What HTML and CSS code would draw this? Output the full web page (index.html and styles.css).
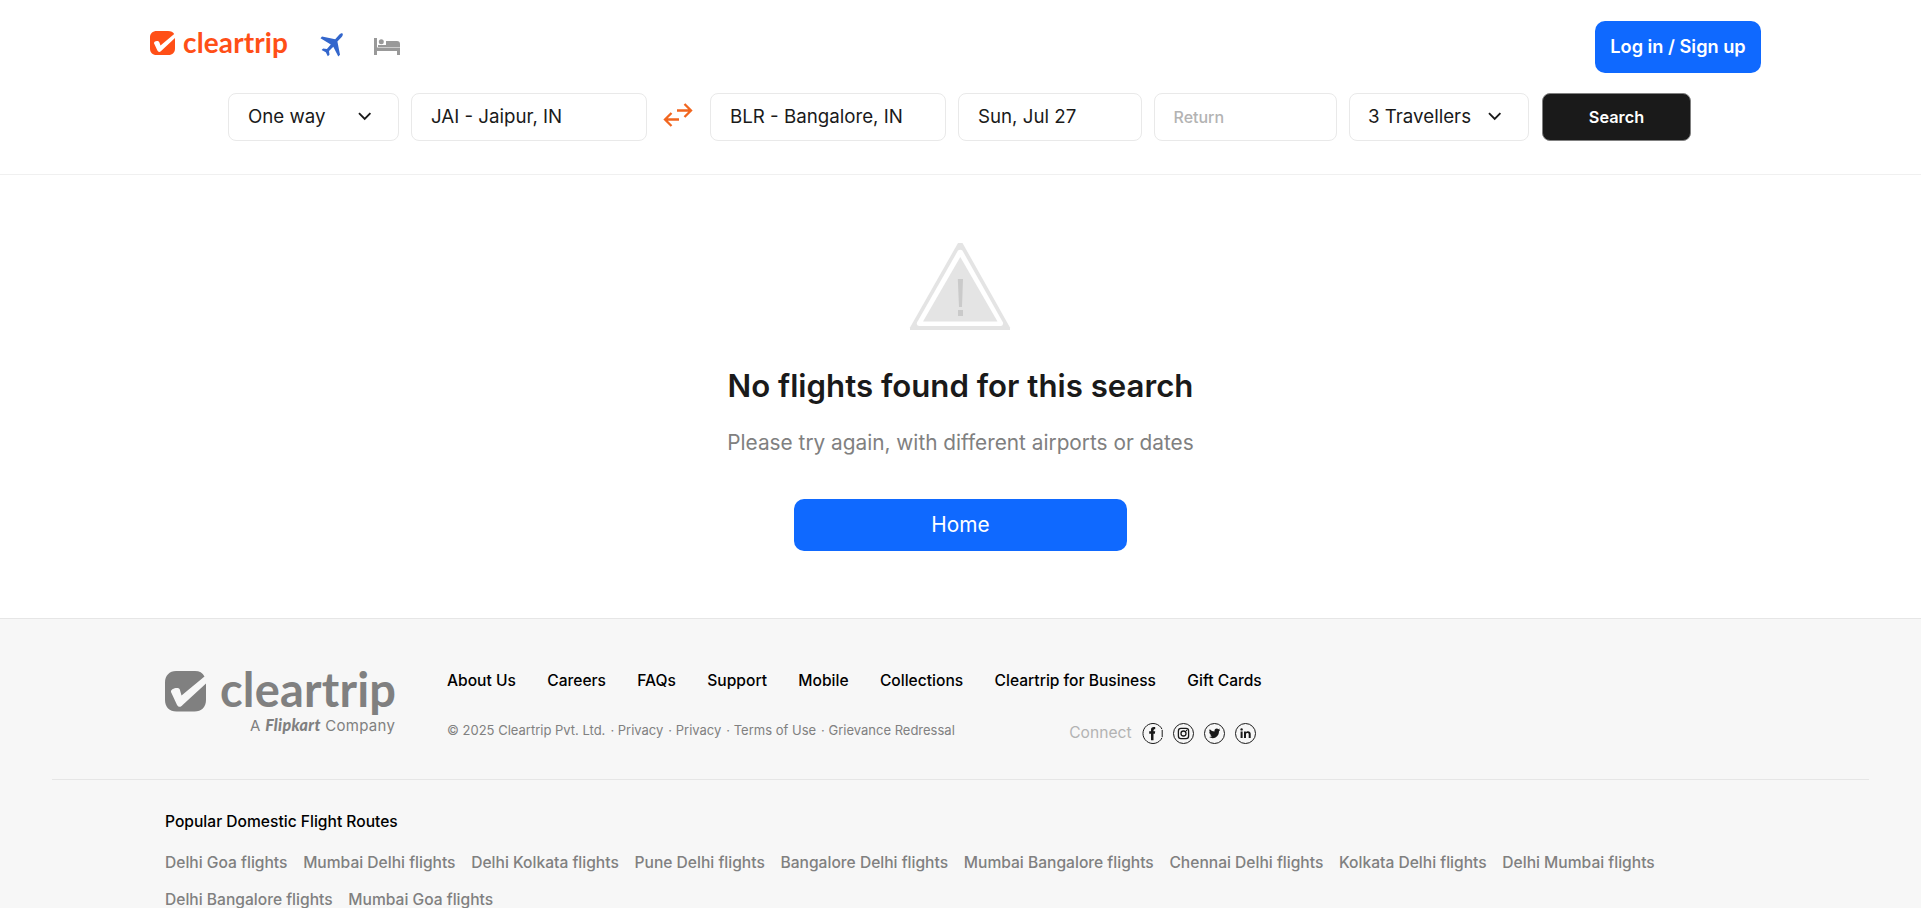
FILE: index.html
```html
<!DOCTYPE html>
<html lang="en">
<head>
<meta charset="utf-8">
<title>Cleartrip</title>
<link rel="stylesheet" href="styles.css">
</head>
<body>
<header class="header">
  <div class="topbar">
    <svg class="logo" width="140" height="40" viewBox="0 -4 140 40">
      <path fill="#ff4f17" d="M7 1h11c3 0 5.200 1.200 6.200 3L10.500 15.500 9.300 12.200C8.600 10.500 4 10.600 4 13.300L7.400 20.600c.9 1.800 2.400 1.700 3.700.3L25 8v10.500c0 4-2.500 6.500-6.500 6.500h-12C2.500 25 0 22.500 0 18.500v-11C0 3.500 2.500 1 7 1z"/>
      <text class="wordmark" x="33" y="23" font-size="28" textLength="105" fill="#ff4f17">cleartrip</text>
    </svg>
    <svg class="plane" width="23" height="24" viewBox="0 0 23 24">
      <path fill="#3366cc" d="M22.500.4c.7.800.3 2.300-.8 3.500l-4.300 4.500 2.600 13.300-1.700 1.900-5-9.800-4.300 4.200.5 3.700-1.700 1.500-2-4-4.200-2.200 1.500-1.600 3.800.5 3.900-4.500L.5 5.300 2 3.400l13.200 2.800L19.400 1.600C20.700.3 22-.1 22.500.4z"/>
    </svg>
    <svg class="bed" width="26" height="17" viewBox="0 0 26 17">
      <path fill="#999" d="M0 0h3v9.500h23V17h-3v-4H3v4H0zM12 3h11q3 0 3 3v3H4V7h8z"/>
      <circle cx="7.300" cy="3.800" r="2.500" fill="#999"/>
    </svg>
    <button class="login">Log in / Sign up</button>
  </div>
  <div class="search">
    <div class="field trip"><span>One way</span><svg width="14" height="9" viewBox="0 0 14 9"><path class="chev" d="M1 1.200l5.700 5.700L12.400 1.200"/></svg></div>
    <div class="field city">JAI - Jaipur, IN</div>
    <svg class="swap" width="30" height="24" viewBox="0 0 30 24"><path d="M14 7.500h14M21.500 1l6.500 6.500-6.500 6.500M16 16.500H2M8.500 10L2 16.500 8.500 23"/></svg>
    <div class="field city">BLR - Bangalore, IN</div>
    <div class="field date">Sun, Jul 27</div>
    <div class="field date empty">Return</div>
    <div class="field pax"><span>3 Travellers</span><svg width="14" height="9" viewBox="0 0 14 9"><path class="chev" d="M1 1.200l5.700 5.700L12.400 1.200"/></svg></div>
    <button class="go">Search</button>
  </div>
</header>
<main class="empty-state">
  <svg class="warn" width="100" height="88" viewBox="0 0 100 88">
    <path fill="#e4e4e4" d="M48 0h4.500L100 84.500V87H0v-2.500z"/>
    <path fill="#fff" d="M48 7.500q2.200-1.500 4.400 0L93 79.500q.5 3-2 3.500H9q-3-.5-2-3.500z"/>
    <path fill="#e4e4e4" d="M50.300 14L87.500 78.500H13z"/>
    <path fill="#cacaca" d="M47.800 36h5.200l-1 28h-3zM48 67h5v6h-5z"/>
  </svg>
  <h1 class="title">No flights found for this search</h1>
  <p class="subtitle">Please try again, with different airports or dates</p>
  <button class="home">Home</button>
</main>
<footer class="footer">
  <div class="about">
    <svg class="brand" width="232" height="84" viewBox="0 -12 232 84">
      <path fill="#808080" d="M11 0h19c4.500 0 7.500 1.800 9.500 5.500L16.500 24.500 14.800 18.600C13.500 15.500 5.500 17.500 6 21L11.800 33.500c1.400 3 4 3 5.800.5L41 12.500V29c0 7-4.500 11.500-11.500 11.500h-18C4.500 40.500 0 36 0 29V11.500C0 4.500 4.500 0 11 0z"/>
      <text class="wordmark" x="55" y="35.500" font-size="47" textLength="176" fill="#808080">cleartrip</text>
      <text class="tagline" x="85" y="59.500" textLength="145" fill="#808080">A <tspan class="flipkart">Flipkart</tspan> Company</text>
    </svg>
    <div class="info">
      <nav class="links"><a>About Us</a><a>Careers</a><a>FAQs</a><a>Support</a><a>Mobile</a><a>Collections</a><a>Cleartrip for Business</a><a>Gift Cards</a></nav>
      <div class="legal">
        <div class="copy"><span>© 2025 Cleartrip Pvt. Ltd.</span><span>· Privacy</span><span>· Privacy</span><span>· Terms of Use</span><span>· Grievance Redressal</span></div>
        <div class="connect">
          <span>Connect</span>
          <svg width="21" height="21" viewBox="0 0 21 21"><path class="ring" d="M20 6.200A10 10 0 1 0 20 14.800"/><path class="ring" d="M20.200 7v7"/><path d="M9 17.200v-6.400H7.200V8.200H9V6.700c0-2 1.200-3 4.200-2.600v2.200c-1.500-.1-1.700.2-1.700 1.900h1.700l-.3 2.600h-1.400v6.400z"/></svg>
          <svg width="21" height="21" viewBox="0 0 21 21"><circle class="ring" cx="10.500" cy="10.500" r="10"/><rect class="line" x="5.400" y="5.400" width="10.200" height="10.200" rx="2.600"/><circle class="line" cx="10.500" cy="10.500" r="2.500"/><circle cx="13.500" cy="7.500" r=".7"/></svg>
          <svg width="21" height="21" viewBox="0 0 21 21"><circle class="ring" cx="10.500" cy="10.500" r="10"/><path d="M5.800 6.200q2 2.300 4.700 2.400c-.5-3 2.500-4 4-2.400l1.600-.6-.9 1.500 1-.2-1.200 1.400c0 6-5.500 8.500-9.900 5.800q2 0 3-1c-1.100-.1-1.800-.7-2-1.600h1c-1.200-.4-1.900-1.200-1.800-2.500l1 .3c-1.100-.8-1.300-2-.5-3.100z"/></svg>
          <svg width="21" height="21" viewBox="0 0 21 21"><circle class="ring" cx="10.500" cy="10.500" r="10"/><path d="M5.600 8.400h2V15h-2zM9 8.400h1.900v.9c1.100-1.700 4.800-1.600 4.800 1.800V15h-2v-3.500c0-2-2.700-1.900-2.700 0V15H9z"/><circle cx="6.600" cy="6.400" r="1.200"/></svg>
        </div>
      </div>
    </div>
  </div>
  <div class="popular">
    <h2 class="routes-title">Popular Domestic Flight Routes</h2>
    <div class="routes"><a>Delhi Goa flights</a><a>Mumbai Delhi flights</a><a>Delhi Kolkata flights</a><a>Pune Delhi flights</a><a>Bangalore Delhi flights</a><a>Mumbai Bangalore flights</a><a>Chennai Delhi flights</a><a>Kolkata Delhi flights</a><a>Delhi Mumbai flights</a><a>Delhi Bangalore flights</a><a>Mumbai Goa flights</a></div>
  </div>
</footer>
</body>
</html>
```

FILE: styles.css
```css
* { box-sizing: border-box; }
body { margin: 0; height: 908px; overflow: hidden; background: #fff; color: #1a1a1a; font-family: Inter, sans-serif; }
button { border: 0; padding: 0; font-family: inherit; color: #fff; }
svg { display: block; flex: none; overflow: visible; }
.header { height: 175px; border-bottom: 1px solid #f0f0f0; }
.topbar { display: flex; align-items: flex-start; height: 93px; padding: 0 160px 0 150px; }
.wordmark { font-family: Lato, sans-serif; font-weight: 700; }
.logo { margin-top: 26px; }
.plane { margin: 33px 0 0 30px; }
.bed { margin: 38px 0 0 31px; }
.login { margin: 21px 0 0 auto; width: 166px; height: 52px; padding-bottom: 2px; border-radius: 10px; background: #0f69ff; font-size: 18.200px; font-weight: 600; white-space: nowrap; }
.search { display: flex; padding-left: 228px; }
.field { display: flex; align-items: center; height: 48px; margin-right: 12px; padding: 0 19px 1px; border: 1px solid #e9e9e9; border-radius: 8px; font-size: 18.720px; white-space: nowrap; }
.chev { fill: none; stroke: #1a1a1a; stroke-width: 1.9; }
.trip { width: 171px; justify-content: space-between; padding-right: 26px; }
.city { width: 236px; }
.swap { margin: 10px 17px 0 4px; fill: none; stroke: #f1661f; stroke-width: 2.3; }
.date { width: 183.500px; }
.empty { font-size: 16px; font-weight: 500; color: #b3b3b3; padding-top: 1px; }
.pax { width: 180px; margin-right: 13px; padding-left: 18px; justify-content: space-between; padding-right: 26px; }
.go { width: 149px; height: 48px; border: 1px solid #808080; border-radius: 8px; background: #1a1a1a; font-size: 16.300px; font-weight: 600; }
.empty-state { display: flex; flex-direction: column; align-items: center; height: 443px; padding-top: 68px; }
.warn { margin-right: 2px; }
.title { margin: 35px 0 0; font-size: 31.200px; line-height: 40px; font-weight: 600; white-space: nowrap; }
.subtitle { margin: 24px 0 0; font-size: 20.800px; line-height: 26px; color: #808080; white-space: nowrap; }
.home { width: 333px; height: 52px; margin-top: 43px; padding-bottom: 2px; border-radius: 10px; background: #0f69ff; font-size: 20.800px; }
.footer { height: 290px; border-top: 1px solid #e6e6e6; background: #f7f7f7; }
.about { display: flex; height: 161px; margin: 0 52px; padding: 40px 0 0 113px; border-bottom: 1px solid #e6e6e6; }
.tagline { font-size: 15px; }
.flipkart { font-family: Lato, sans-serif; font-size: 16px; font-weight: 900; font-style: italic; }
.info { margin: 12px 0 0 50px; }
.links { display: flex; gap: 31.300px; font-size: 15.600px; line-height: 20px; font-weight: 500; white-space: nowrap; color: #000; }
.legal { display: flex; justify-content: space-between; align-items: flex-start; width: 808.500px; margin-top: 31px; }
.copy { display: flex; gap: 5px; font-size: 13px; line-height: 16px; color: #808080; white-space: nowrap; }
.connect { display: flex; gap: 10px; align-items: center; padding-top: 1px; font-size: 15.600px; line-height: 20px; color: #b3b3b3; }
.connect span { margin-top: -2px; }
.connect svg { fill: #1a1a1a; }
.connect .ring, .connect .line { fill: none; stroke: #1a1a1a; stroke-width: 1; }
.connect .line { stroke-width: 1.300; }
.popular { padding: 31px 165px 0; }
.routes-title { margin: 0; font-size: 15.600px; line-height: 22px; font-weight: 500; color: #000; }
.routes { display: flex; flex-wrap: wrap; gap: 15px 15.700px; margin-top: 19px; font-size: 15.600px; line-height: 22px; font-weight: 500; color: #808080; white-space: nowrap; }
```
